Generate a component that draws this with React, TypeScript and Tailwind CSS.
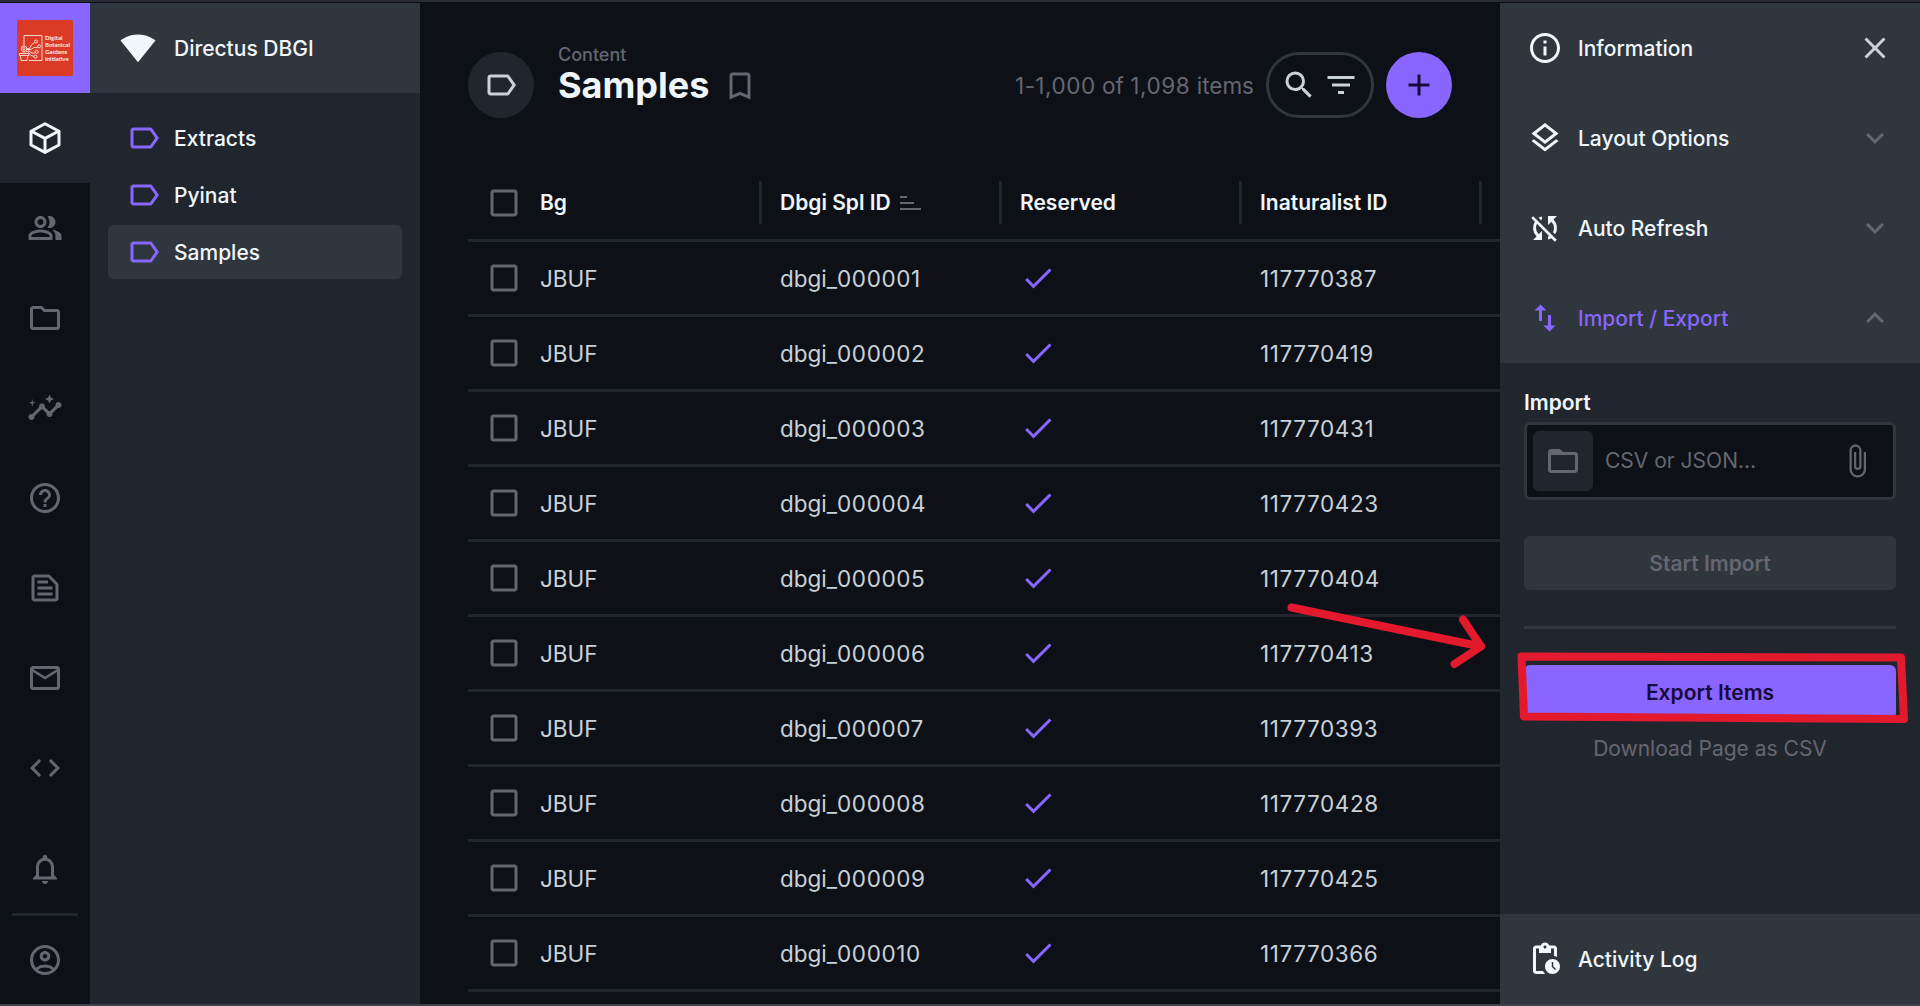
import React from "react";
import {
  MdAdd,
  MdAttachFile,
  MdCheck,
  MdCheckBoxOutlineBlank,
  MdClose,
  MdCode,
  MdExpandLess,
  MdExpandMore,
  MdFilterList,
  MdFolderOpen,
  MdHelpOutline,
  MdImportExport,
  MdInfoOutline,
  MdInsights,
  MdMailOutline,
  MdNotificationsNone,
  MdOutlineAccountCircle,
  MdOutlineBookmarkBorder,
  MdOutlineFolder,
  MdOutlineLabel,
  MdOutlineLayers,
  MdOutlinePeopleAlt,
  MdOutlineTextSnippet,
  MdPendingActions,
  MdSearch,
  MdSignalWifi4Bar,
  MdSyncDisabled,
} from "react-icons/md";

const ids = [
  "117770387",
  "117770419",
  "117770431",
  "117770423",
  "117770404",
  "117770413",
  "117770393",
  "117770428",
  "117770425",
  "117770366",
];

const rows = ids.map((id, i) => ({
  bg: "JBUF",
  num: String(i + 1).padStart(6, "0"),
  id,
}));

function Digits({ children }: { children: React.ReactNode }) {
  return <span className="tracking-[0.6px]">{children}</span>;
}

function BoxIcon() {
  return (
    <svg width="36" height="36" viewBox="0 0 36 36" fill="none" stroke="currentColor" strokeWidth="3" strokeLinejoin="round">
      <path d="M18 3.700 32 11.200V25L18 32.400 4 25V11.200L18 3.700Z" />
      <path d="M4.500 11.200 18 18.400l13.500-7.200M18 18.400V32" />
    </svg>
  );
}

function Logo() {
  return (
    <div className="flex h-14 w-14 items-center rounded-xs bg-[#da3b27] pl-0.5 text-[#fdeeeb]">
      <svg width="24" height="28" viewBox="19 34 24 28" fill="none" stroke="#fbe3df" strokeWidth="0.9" className="shrink-0">
        <path d="M24 45.500V35.500H42V60.500H29M19.300 53.500h9.600v2h-9.600zM20.300 55.500l.8 5h6l.8-5M24 53.500v-2" />
        <circle cx="24" cy="48.700" r="1.200" />
        <circle cx="24" cy="48.700" r="2.800" />
        <path d="M27 48.500h2.500l2-3.500 3-2.500M27 49.500h4l3-2h3.500M26 51.500l3-.5 3 2h3M28 51.500l3 4 3 .8" />
        <circle cx="36" cy="41.500" r="1.500" />
        <circle cx="39" cy="46.300" r="1.500" />
        <circle cx="36.700" cy="51.800" r="1.500" />
        <circle cx="35.500" cy="56.700" r="1.500" />
      </svg>
      <div className="ml-0.5 flex flex-col font-['Lato',sans-serif] text-[6px] leading-[7.200px] font-bold first-letter:font-black">
        {["Digital", "Botanical", "Gardens", "Initiative"].map((w) => (
          <span key={w}>{w}</span>
        ))}
      </div>
    </div>
  );
}

const modules = [
  MdOutlinePeopleAlt,
  MdOutlineFolder,
  MdInsights,
  MdHelpOutline,
  MdOutlineTextSnippet,
  MdMailOutline,
  MdCode,
];

function ModuleBar() {
  return (
    <nav className="flex w-[90px] shrink-0 flex-col bg-[#0d1117] text-[#666672]">
      <div className="flex h-[90px] items-center justify-center bg-[#8866ff]">
        <Logo />
      </div>
      <div className="flex h-[90px] items-center justify-center bg-[#21262e] text-[#f0f6fc]">
        <BoxIcon />
      </div>
      {modules.map((Icon, i) => (
        <div key={i} className="flex h-[90px] items-center justify-center">
          <Icon size={36} />
        </div>
      ))}
      <div className="mt-auto flex h-[90px] items-center justify-center pt-0.5">
        <MdNotificationsNone size={36} />
      </div>
      <div className="mx-3 h-[3px] bg-[#21262e]" />
      <div className="flex h-[88px] items-center justify-center">
        <MdOutlineAccountCircle size={36} />
      </div>
    </nav>
  );
}

function NavPanel() {
  return (
    <aside className="w-[330px] shrink-0 bg-[#21262e] text-[21px] font-medium text-[#f0f6fc]">
      <div className="flex h-[90px] items-center gap-[18px] bg-[#30363d] pl-[30px]">
        <MdSignalWifi4Bar size={36} />
        <span className="pt-0.5">Directus DBGI</span>
      </div>
      <ul className="flex flex-col gap-[3px] px-[18px] pt-[18px]">
        {["Extracts", "Pyinat", "Samples"].map((name) => (
          <li
            key={name}
            className={
              "flex h-[54px] items-center gap-3 rounded-md pl-[18px] " + (name === "Samples" ? "bg-[#30363d]" : "")
            }
          >
            <MdOutlineLabel size={36} className="text-[#8866ff]" />
            <span className="pt-0.5">{name}</span>
          </li>
        ))}
      </ul>
    </aside>
  );
}

function HeaderCell({ children }: { children: React.ReactNode }) {
  return (
    <div className="flex h-[43px] w-[240px] shrink-0 items-center gap-1.5 border-r-[3px] border-[#21262e] pt-px pl-[18px]">
      {children}
    </div>
  );
}

function Content() {
  return (
    <main className="flex min-w-0 flex-1 flex-col overflow-hidden bg-[#0d1117] pl-12">
      <header className="mt-[49px] flex h-[66px] shrink-0 items-center pr-12">
        <div className="flex h-[66px] w-[66px] items-center justify-center rounded-full bg-[#21262e] text-[#c9d1d9]">
          <MdOutlineLabel size={36} />
        </div>
        <div className="ml-6 flex flex-col pb-[7px]">
          <span className="-mt-[17px] text-[18px] leading-[24px] font-medium text-[#666672]">Content</span>
          <div className="flex h-9 items-center">
            <h1 className="text-[36px] leading-[36px] font-bold text-[#f0f6fc]">Samples</h1>
            <MdOutlineBookmarkBorder size={36} className="mt-0.5 ml-[13px] text-[#666672]" />
          </div>
        </div>
        <span className="ml-auto pt-px text-[22.500px] text-[#666672]">
          <Digits>1</Digits>-<Digits>1</Digits>,<Digits>000</Digits> of <Digits>1</Digits>,<Digits>098</Digits> items
        </span>
        <div className="ml-3 flex h-[66px] w-[108px] items-center justify-center gap-1.5 rounded-full border-[3px] border-[#30363d] text-[#c9d1d9]">
          <MdSearch size={36} />
          <MdFilterList size={36} />
        </div>
        <div className="ml-3 flex h-[66px] w-[66px] items-center justify-center rounded-full bg-[#8866ff] text-[#160b3c]">
          <MdAdd size={36} />
        </div>
      </header>
      <div className="mt-12">
        <div className="flex h-[76px] items-center border-b-[3px] border-[#21262e] pl-[18px] text-[21px] font-semibold text-[#f0f6fc]">
          <MdCheckBoxOutlineBlank size={36} className="shrink-0 text-[#666672]" />
          <HeaderCell>Bg</HeaderCell>
          <HeaderCell>
            Dbgi Spl ID
            <svg width="27" height="24" viewBox="0 0 27 24" className="text-[#666672]" fill="currentColor">
              <path d="M3 5h7v2H3zM3 11h14v2H3zM3 17h21v2H3z" />
            </svg>
          </HeaderCell>
          <HeaderCell>Reserved</HeaderCell>
          <HeaderCell>Inaturalist ID</HeaderCell>
        </div>
        {rows.map((r) => (
          <div
            key={r.id}
            className="flex h-[75px] items-center border-b-[3px] border-[#21262e] pl-[18px] text-[22.500px] text-[#c9d1d9]"
          >
            <MdCheckBoxOutlineBlank size={36} className="shrink-0 text-[#666672]" />
            <div className="w-[240px] shrink-0 pt-0.5 pl-[18px]">{r.bg}</div>
            <div className="w-[240px] shrink-0 pt-0.5 pl-[18px]">
              dbgi_<Digits>{r.num}</Digits>
            </div>
            <div className="w-[240px] shrink-0 pl-[18px]">
              <MdCheck size={36} className="text-[#8866ff]" />
            </div>
            <div className="w-[240px] shrink-0 pt-0.5 pl-[18px]">
              <Digits>{r.id}</Digits>
            </div>
          </div>
        ))}
      </div>
    </main>
  );
}

const sections = [
  { label: "Information", Icon: MdInfoOutline, End: MdClose, tone: "text-[#f0f6fc]", endTone: "text-[#c9d1d9]" },
  { label: "Layout Options", Icon: MdOutlineLayers, End: MdExpandMore, tone: "text-[#f0f6fc]", endTone: "text-[#666672]" },
  { label: "Auto Refresh", Icon: MdSyncDisabled, End: MdExpandMore, tone: "text-[#f0f6fc]", endTone: "text-[#666672]" },
  { label: "Import / Export", Icon: MdImportExport, End: MdExpandLess, tone: "text-[#8866ff]", endTone: "text-[#666672]" },
];

function Sidebar() {
  return (
    <aside className="flex w-[420px] shrink-0 flex-col bg-[#21262e] text-[21px]">
      {sections.map(({ label, Icon, End, tone, endTone }) => (
        <div key={label} className={"flex h-[90px] shrink-0 items-center bg-[#30363d] px-[27px] font-medium " + tone}>
          <Icon size={36} />
          <span className="ml-[15px] pt-0.5">{label}</span>
          <End size={36} className={"ml-auto " + endTone} />
        </div>
      ))}
      <div className="flex flex-col px-6 pt-6">
        <div className="h-[35px] leading-[31px] font-semibold text-[#f0f6fc]">Import</div>
        <div className="flex h-[78px] items-center rounded-md border-[3px] border-[#30363d] bg-[#0d1117] pr-[18px] pl-1.5 text-[#666672]">
          <div className="flex h-[60px] w-[60px] items-center justify-center rounded-md bg-[#21262e]">
            <MdFolderOpen size={36} />
          </div>
          <span className="ml-3">CSV or JSON...</span>
          <MdAttachFile size={36} className="ml-auto" />
        </div>
        <div className="mt-9 flex h-[54px] items-center justify-center rounded-md bg-[#30363d] pt-px font-semibold text-[#666672]">
          Start Import
        </div>
        <div className="mt-9 h-[3px] bg-[#30363d]" />
        <div className="mt-9 flex h-[54px] items-center justify-center rounded-md bg-[#8866ff] pt-px font-semibold text-[#160b3c]">
          Export Items
        </div>
        <div className="mt-3.5 text-center leading-[31px] text-[#666672]">Download Page as CSV</div>
      </div>
      <div className="mt-auto flex h-[90px] shrink-0 items-center bg-[#30363d] px-[27px] font-medium text-[#f0f6fc]">
        <MdPendingActions size={36} />
        <span className="ml-[15px] pt-0.5">Activity Log</span>
      </div>
    </aside>
  );
}

function Annotation() {
  return (
    <svg
      className="pointer-events-none absolute top-[580px] left-[1270px]"
      width="650"
      height="160"
      viewBox="1270 580 650 160"
      fill="none"
      stroke="#e3192d"
      strokeWidth="8"
      strokeLinecap="round"
      strokeLinejoin="round"
    >
      <path d="M1291.500 607.500 1481 646.500M1463 619.500 1481 646.500 1454.500 664" />
      <path d="M1521.500 656.500 1901 657.500 1904 719 1524 716.500Z" />
    </svg>
  );
}

export default function App() {
  return (
    <div className="relative flex h-[1006px] w-[1920px] flex-col overflow-hidden bg-[#0d1117] font-['Inter',sans-serif]">
      <div className="mb-px h-0.5 shrink-0 bg-[#2b2b35]" />
      <div className="flex min-h-0 flex-1">
        <ModuleBar />
        <NavPanel />
        <Content />
        <Sidebar />
      </div>
      <div className="h-0.5 shrink-0 bg-[#3c404a]" />
      <Annotation />
    </div>
  );
}
